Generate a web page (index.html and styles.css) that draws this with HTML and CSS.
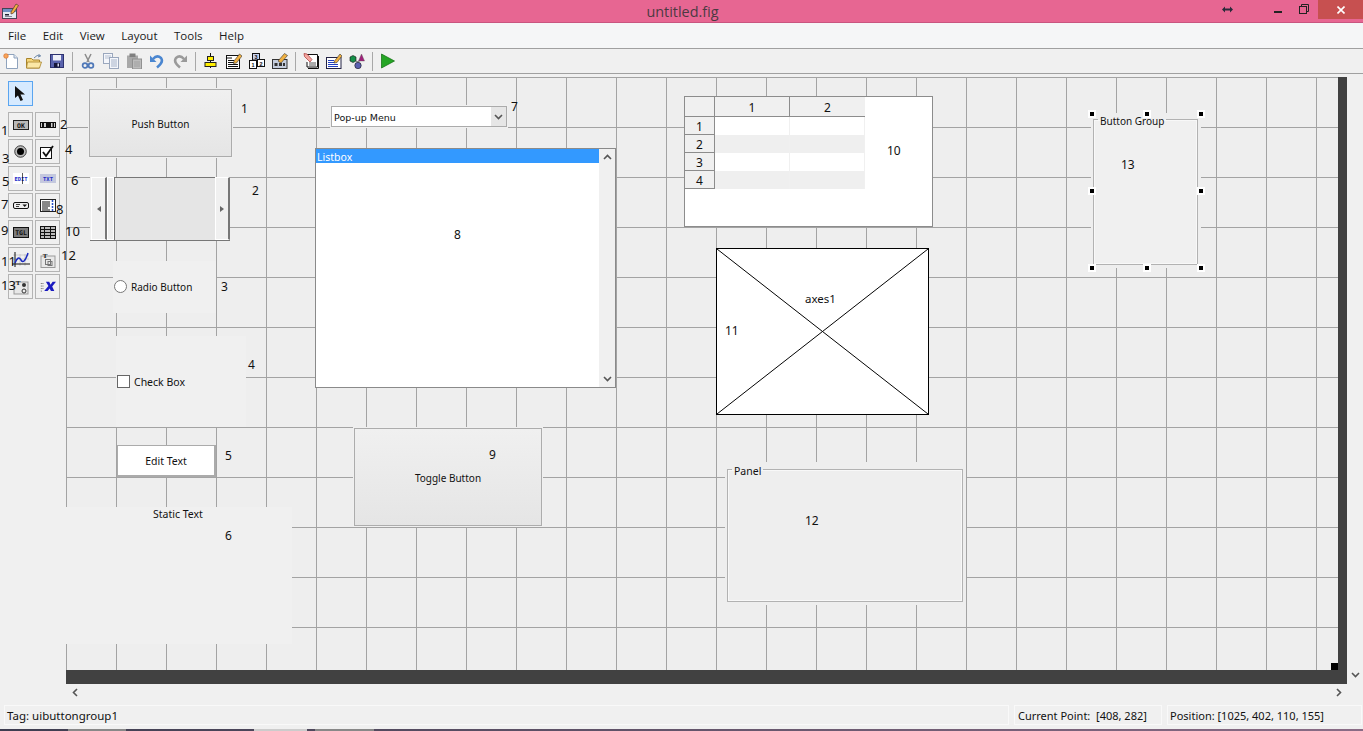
FILE: index.html
```html
<!DOCTYPE html>
<html lang="en">
<head>
<meta charset="utf-8">
<title>untitled.fig</title>
<link rel="stylesheet" href="styles.css">
</head>
<body>
<header class="titlebar">
  <svg class="app-icon" viewBox="0 0 18 18" width="18" height="18"><rect x="1.500" y="6.500" width="14" height="10" fill="#e4e9f2" stroke="#445"/><rect x="2" y="7" width="13" height="3" fill="#6f8fc4"/><rect x="4" y="12" width="4" height="1.500" fill="#223"/><rect x="4" y="14" width="7" height="1" fill="#889"/><path d="M10 10 L15 2 L17.500 3.500 L12.500 11 L10 12 Z" fill="#f0b040" stroke="#643" stroke-width=".8"/></svg>
  <div class="title">untitled.fig</div>
  <div class="winbtns">
    <svg class="wb-resize" viewBox="0 0 11 7" width="11" height="7"><path d="M0 3.500 L3 .5 V2.500 H8 V.5 L11 3.500 L8 6.500 V4.500 H3 V6.500 Z" fill="#2a2a3a"/></svg>
    <span class="wb-min"></span>
    <svg class="wb-restore" viewBox="0 0 10 10" width="10" height="10"><path d="M2.500 2.500 V.5 H9.500 V7.500 H7.500" fill="none" stroke="#222"/><rect x=".5" y="2.500" width="7" height="7" fill="none" stroke="#222"/></svg>
    <div class="wb-close"><svg viewBox="0 0 8 8" width="8" height="8"><path d="M.5 .5 L7.500 7.500 M7.500 .5 L.5 7.500" stroke="#fff" stroke-width="1.600"/></svg></div>
  </div>
</header>
<nav class="menubar">
  <span>File</span><span>Edit</span><span>View</span><span>Layout</span><span>Tools</span><span>Help</span>
</nav>
<div class="toolbar">
  <svg class="tool" viewBox="0 0 16 16"><path d="M3.500 1.500 H11 L14.500 5 V15.500 H3.500 Z" fill="#fff" stroke="#8fa3bd"/><path d="M11 1.500 V5 H14.500" fill="#dfe6f0" stroke="#8fa3bd"/><circle cx="3" cy="3" r="2.300" fill="#f6a45c" stroke="#d86a20" stroke-width=".6"/></svg>
  <svg class="tool" viewBox="0 0 16 16"><path d="M.5 5.500 H5.500 L7 7 H13.500 V15 H.5 Z" fill="#f5d67a" stroke="#a8842c"/><path d="M1.500 9 H15.500 L13.500 15 H.5 Z" fill="#fbe8a6" stroke="#a8842c" stroke-width=".8"/><path d="M8 5 Q11 1 14.500 3 M14.500 3 L12.500 1 M14.500 3 L12 4" fill="none" stroke="#6a86a8"/></svg>
  <svg class="tool" viewBox="0 0 16 16"><rect x="1.500" y="1.500" width="13" height="13" fill="#5a63ad" stroke="#2d3270"/><rect x="4" y="2" width="8" height="5.500" fill="#eef0f8"/><rect x="5" y="10" width="6" height="4.500" fill="#15163a"/><rect x="8.500" y="10.500" width="1.500" height="3" fill="#d8daf0"/></svg>
  <i class="sep"></i>
  <svg class="tool" viewBox="0 0 16 16"><path d="M5 1 L9 9 M11 1 L7 9" stroke="#8b8b8b" stroke-width="1.500"/><circle cx="5" cy="12.500" r="2.400" fill="none" stroke="#4f78b8" stroke-width="1.700"/><circle cx="11" cy="12.500" r="2.400" fill="none" stroke="#4f78b8" stroke-width="1.700"/></svg>
  <svg class="tool" viewBox="0 0 16 16"><rect x=".5" y=".5" width="9" height="10" fill="#f4f6fb" stroke="#9aa7bd"/><path d="M2 3 H8 M2 5 H6" stroke="#b5bfd0"/><rect x="6.500" y="4.500" width="9" height="11" fill="#f4f6fb" stroke="#9aa7bd"/><path d="M8 7 H14 M8 9 H14 M8 11 H14 M8 13 H14" stroke="#a5b2c8"/></svg>
  <svg class="tool" viewBox="0 0 16 16"><rect x="1" y="2.500" width="11" height="12.500" fill="#a8a8a8"/><rect x="3.500" y=".5" width="6" height="3.500" fill="#808080"/><rect x="6.500" y="6" width="9" height="10" fill="#bcbcbc" stroke="#909090"/><path d="M8 9 H14 M8 11 H14 M8 13 H14" stroke="#a0a0a0"/></svg>
  <svg class="tool" viewBox="0 0 16 16"><path d="M4 6 Q8 1.500 12 5 Q15 9 8 14.500" fill="none" stroke="#4a86d0" stroke-width="2.600"/><path d="M1 2.500 V9 H7.500 Z" fill="#4a86d0"/></svg>
  <svg class="tool" viewBox="0 0 16 16"><path d="M12 6 Q8 1.500 4 5 Q1 9 8 14.500" fill="none" stroke="#9a9a9a" stroke-width="2.600"/><path d="M15 2.500 V9 H8.500 Z" fill="#9a9a9a"/></svg>
  <i class="sep"></i>
  <svg class="tool" viewBox="0 0 16 16"><path d="M7.500 0 V15" stroke="#111"/><rect x="4.500" y="3.500" width="6" height="4" fill="#ffee00" stroke="#222"/><rect x="2" y="9.500" width="11" height="4" fill="#ffee00" stroke="#222"/></svg>
  <svg class="tool" viewBox="0 0 16 16"><rect x=".5" y="2.500" width="13" height="13" fill="#fff" stroke="#111"/><path d="M.5 5 H6 M2 7.500 H8 M2 9.500 H8 M2 11.500 H12 M2 13.500 H12" stroke="#111"/><path d="M8 8 L13.500 1 L16 3 L10.500 10 L7.500 10.500 Z" fill="#f0b040" stroke="#333" stroke-width=".6"/></svg>
  <svg class="tool" viewBox="0 0 16 16"><rect x="3.500" y=".5" width="7" height="6.500" fill="#c9d3ee" stroke="#111"/><rect x=".5" y="7.500" width="7" height="8" fill="#fff" stroke="#111"/><rect x="8.500" y="6.500" width="7" height="7" fill="#fff" stroke="#111"/><text x="7" y="5.800" class="tt">3</text><text x="4" y="13.800" class="tt">1</text><text x="12" y="12.500" class="tt">2</text></svg>
  <svg class="tool" viewBox="0 0 16 16"><rect x=".5" y="6.500" width="14.500" height="9" fill="#c6cedd" stroke="#333"/><rect x="2.500" y="10" width="3" height="3" fill="#333"/><rect x="7" y="10" width="3" height="3" fill="#333"/><rect x="11" y="10" width="2" height="3" fill="#333"/><path d="M6 8 L12.500 .5 L15.500 2.500 L9 10 Z" fill="#f0b040" stroke="#333" stroke-width=".6"/></svg>
  <i class="sep"></i>
  <svg class="tool" viewBox="0 0 16 16"><path d="M2.500 1.500 H14.500 V14 H4 V9" fill="#fff" stroke="#111"/><path d="M15.500 3 V15.500 H5" fill="none" stroke="#111"/><path d="M6 10 H13 M6 12 H13" stroke="#555"/><path d="M7 9 L1.500 3.500 L1 .5 L4 1 L9 6.500 Z" fill="#f3a7a0" stroke="#a33" stroke-width=".7"/></svg>
  <svg class="tool" viewBox="0 0 16 16"><rect x=".5" y="4.500" width="14.500" height="11" fill="#fff" stroke="#224"/><path d="M2 7.500 H8 M2 9.500 H9 M2 11.500 H12 M2 13.500 H12" stroke="#2240c0"/><path d="M8.500 8 L14 1 L16 3 L11 9.500 L8 10 Z" fill="#f0b040" stroke="#333" stroke-width=".6"/></svg>
  <svg class="tool" viewBox="0 0 16 16"><path d="M1 4 L4 2.500 L7 4 V8 L4 9.500 L1 8 Z" fill="#159048" stroke="#111" stroke-width=".6"/><path d="M12.500 1 L15.500 8 H9.500 Z" fill="#a0207a" stroke="#555" stroke-width=".4"/><rect x="6.500" y="8" width="4" height="1" fill="#888"/><circle cx="9" cy="12.500" r="3.200" fill="#5a60b0" stroke="#223" stroke-width=".7"/></svg>
  <i class="sep"></i>
  <svg class="tool" viewBox="0 0 16 16"><path d="M1.500 1 L14.500 8 L1.500 15 Z" fill="#25a525" stroke="#0c6a0c" stroke-width=".7"/></svg>
</div>
<main class="workspace">
  <aside class="palette">
    <div class="pal-btn pal-active"><svg class="ic-arrow" viewBox="0 0 13 17"><path d="M1 1 V13 L4 10.500 L6.500 16 L9 15 L6.500 9.500 H11 Z" fill="#111"/></svg></div>
    <div class="pal-grid">
      <div class="pal-btn"><svg viewBox="0 0 16 10"><rect x=".5" y=".5" width="15" height="9" fill="#b9b9b9" stroke="#222"/><text x="8" y="7.500" class="pt">OK</text></svg><b class="pn p1">1</b></div>
      <div class="pal-btn"><svg viewBox="0 0 16 6"><rect x=".5" y=".5" width="15" height="5" fill="#d0d0d0" stroke="#111"/><rect x="2" y=".5" width="2" height="5" fill="#111"/><rect x="6" y=".5" width="5" height="5" fill="#111"/><rect x="12.500" y=".5" width="1.500" height="5" fill="#111"/></svg><b class="pn p2">2</b></div>
      <div class="pal-btn"><svg class="ic-13" viewBox="0 0 14 14"><circle cx="7" cy="7" r="6.200" fill="#bbb" stroke="#333"/><circle cx="7" cy="7" r="3.800" fill="#000"/></svg><b class="pn p3">3</b></div>
      <div class="pal-btn"><svg class="ic-15" viewBox="0 0 15 14"><rect x=".5" y="2.500" width="11" height="11" fill="#fff" stroke="#111"/><path d="M3 7 L6 11 L13 1" fill="none" stroke="#111" stroke-width="1.800"/></svg><b class="pn p4">4</b></div>
      <div class="pal-btn"><svg viewBox="0 0 16 11"><rect width="16" height="11" fill="#fff"/><text x="8" y="8" class="pt pt-b">EDIT</text><path d="M9.500 0 V11" stroke="#111" stroke-width=".7"/></svg><b class="pn p5">5</b></div>
      <div class="pal-btn"><svg viewBox="0 0 16 9"><rect width="16" height="9" fill="#c4c8de"/><text x="8" y="6.800" class="pt pt-b">TXT</text></svg><b class="pn p6">6</b></div>
      <div class="pal-btn"><svg viewBox="0 0 16 7"><rect x=".5" y=".5" width="15" height="6" rx="1.500" fill="#eee" stroke="#111"/><path d="M3 2.500 H7 M3 4.500 H6" stroke="#111" stroke-width=".8"/><path d="M9.500 2.500 H14 L11.700 5 Z" fill="#111"/></svg><b class="pn p7">7</b></div>
      <div class="pal-btn"><svg viewBox="0 0 16 13"><rect x=".5" y=".5" width="15" height="12" fill="#fff" stroke="#222"/><path d="M2 3 H10 M2 5 H10 M2 7 H10 M2 9 H8 M2 11 H10" stroke="#111"/><path d="M12.500 1 V12" stroke="#2a50c8" stroke-width="1.500" stroke-dasharray="2 1"/></svg><b class="pn p8">8</b></div>
      <div class="pal-btn"><svg viewBox="0 0 16 11"><rect x=".5" y=".5" width="15" height="10" fill="#7c7c7c" stroke="#111"/><text x="8" y="8" class="pt">TGL</text></svg><b class="pn p9">9</b></div>
      <div class="pal-btn"><svg viewBox="0 0 16 13"><rect x=".5" y=".5" width="15" height="12" fill="#bbb" stroke="#111"/><path d="M.5 3.500 H15.500 M.5 6.500 H15.500 M.5 9.500 H15.500 M4.500 .5 V12.500 M10.500 .5 V12.500" stroke="#111"/></svg><b class="pn p10">10</b></div>
      <div class="pal-btn"><svg class="ic-18" viewBox="0 0 18 17"><path d="M8 3 V15 M13 3 V15 M1 8 H17 M1 4 H17" stroke="#b8b8b8" stroke-width=".6"/><path d="M3 1 V16 M0 13 H18" stroke="#111"/><path d="M3 12 Q6 4 9 9 T16 2" fill="none" stroke="#1a2ac0" stroke-width="1.500"/></svg><b class="pn p11">11</b></div>
      <div class="pal-btn"><svg viewBox="0 0 16 16"><rect x="1" y="4" width="14" height="11.500" fill="#e8e8e8" stroke="#999"/><rect x="5.500" y="7.500" width="5" height="5" fill="none" stroke="#777"/><rect x="8" y="9.500" width="4" height="4" fill="none" stroke="#777"/><text x="5" y="5.500" class="pt pt-t">T</text></svg><b class="pn p12">12</b></div>
      <div class="pal-btn"><svg viewBox="0 0 16 16"><rect x="1" y="3" width="14" height="12" fill="#e8e8e8" stroke="#999"/><text x="5" y="6" class="pt pt-t">T</text><circle cx="11" cy="6" r="2" fill="#333"/><circle cx="11" cy="12" r="2" fill="#eee" stroke="#333"/></svg><b class="pn p13">13</b></div>
      <div class="pal-btn"><svg viewBox="0 0 19 13"><path d="M1 3 H5 M1 6 H4 M1 9 H4 M1 12 H3" stroke="#333" stroke-dasharray="1 1"/><path d="M7 1 H11 L12.500 4.500 L15 1 H19 L14.500 6.500 L17 12 H13 L11.500 9 L9 12 H5 L10 6 Z" fill="#1a1ac0"/></svg></div>
    </div>
  </aside>
  <section class="stage">
    <div class="canvas-row">
      <div class="canvas">
        <div class="wg pushbtn">Push Button</div>
        <div class="wg slider"><span class="sl-btn sl-left"><i class="tri-l"></i></span><span class="sl-thumb"></span><span class="sl-track"></span><span class="sl-btn sl-right"><i class="tri-r"></i></span></div>
        <div class="wg radio"><i class="radio-dot"></i>Radio Button</div>
        <div class="wg checkbox"><i class="check-box"></i>Check Box</div>
        <div class="wg edit">Edit Text</div>
        <div class="wg static">Static Text</div>
        <div class="wg popup"><span class="popup-label">Pop-up Menu</span><span class="popup-arrow"><svg viewBox="0 0 9 6" width="9" height="6"><path d="M1 1 L4.500 4.500 L8 1" fill="none" stroke="#555" stroke-width="1.600"/></svg></span></div>
        <div class="wg listbox"><div class="lb-items"><div class="lb-sel">Listbox</div></div><div class="lb-scroll"><svg viewBox="0 0 9 6" width="9" height="6"><path d="M1 5 L4.500 1.500 L8 5" fill="none" stroke="#555" stroke-width="1.600"/></svg><svg viewBox="0 0 9 6" width="9" height="6"><path d="M1 1 L4.500 4.500 L8 1" fill="none" stroke="#555" stroke-width="1.600"/></svg></div></div>
        <div class="wg toggle">Toggle Button</div>
        <div class="wg table">
          <div class="t-head t-corner"></div><div class="t-head t-col">1</div><div class="t-head t-col t-col2">2</div>
          <div class="t-row">1</div><div class="t-c"></div><div class="t-c"></div>
          <div class="t-row">2</div><div class="t-c t-alt"></div><div class="t-c t-alt"></div>
          <div class="t-row">3</div><div class="t-c"></div><div class="t-c"></div>
          <div class="t-row">4</div><div class="t-c t-alt"></div><div class="t-c t-alt"></div>
        </div>
        <div class="wg axes"><svg viewBox="0 0 212 166" preserveAspectRatio="none"><path d="M0 0 L212 166 M212 0 L0 166" stroke="#000" stroke-width="1" fill="none"/></svg><span class="axes-label">axes1</span></div>
        <div class="halo halo-panel"></div>
        <fieldset class="wg panel"><legend>Panel</legend></fieldset>
        <div class="halo halo-group"></div>
        <fieldset class="wg bgroup"><legend>Button Group</legend></fieldset>
        <i class="hd hd1"></i><i class="hd hd2"></i><i class="hd hd3"></i><i class="hd hd4"></i><i class="hd hd5"></i><i class="hd hd6"></i><i class="hd hd7"></i><i class="hd hd8"></i>
        <b class="n n1">1</b><b class="n n2">2</b><b class="n n3">3</b><b class="n n4">4</b><b class="n n5">5</b><b class="n n6">6</b><b class="n n7">7</b><b class="n n8">8</b><b class="n n9">9</b><b class="n n10">10</b><b class="n n11">11</b><b class="n n12">12</b><b class="n n13">13</b>
        <i class="corner"></i>
      </div>
      <div class="vbar"></div>
      <div class="vscroll"><svg viewBox="0 0 9 6" width="9" height="6"><path d="M1 1 L4.500 4.500 L8 1" fill="none" stroke="#555" stroke-width="1.600"/></svg></div>
    </div>
    <div class="hbar"></div>
    <div class="hscroll"><svg viewBox="0 0 6 9" width="6" height="9"><path d="M5 1 L1.500 4.500 L5 8" fill="none" stroke="#555" stroke-width="1.600"/></svg><svg viewBox="0 0 6 9" width="6" height="9"><path d="M1 1 L4.500 4.500 L1 8" fill="none" stroke="#555" stroke-width="1.600"/></svg></div>
  </section>
</main>
<footer class="statusbar">
  <div class="st st-tag">Tag: uibuttongroup1</div>
  <div class="st st-point">Current Point:&nbsp; [408, 282]</div>
  <div class="st st-pos">Position: [1025, 402, 110, 155]</div>
</footer>
<div class="taskbar"><span class="tb tb1"></span><span class="tb tb2"></span><span class="tb tb3"></span></div>
</body>
</html>
```
FILE: styles.css
```css
* { box-sizing: border-box; }
html, body { margin: 0; height: 731px; overflow: hidden; }
body { display: flex; flex-direction: column; background: #f0f0f0; font-family: "Noto Sans", "Liberation Sans", sans-serif; font-size: 11px; color: #111; }

.titlebar { height: 23px; flex: none; background: #e76692; border-bottom: 1px solid #c95580; display: flex; align-items: flex-start; position: relative; }
.app-icon { margin: 2px 0 0 1px; }
.title { position: absolute; left: 0; right: 0; top: 3px; padding-left: 2px; text-align: center; font-size: 14.400px; line-height: 18px; color: #4c3a42; font-family: "Open Sans", sans-serif; }
.winbtns { margin-left: auto; height: 19px; position: relative; width: 141px; }
.wb-resize { position: absolute; left: 0; top: 6px; }
.wb-min { position: absolute; left: 52px; top: 11px; width: 8px; height: 2px; background: #222; }
.wb-restore { position: absolute; left: 77px; top: 4px; }
.wb-close { position: absolute; right: 0; top: 0; width: 45px; height: 19px; background: #c75050; display: flex; align-items: center; justify-content: center; }

.menubar { height: 26px; flex: none; background: #f5f6f7; border-bottom: 1px solid #a0a0a0; display: flex; align-items: center; gap: 16.500px; padding: 0 0 0 8px; font-size: 11.500px; font-family: "Open Sans", sans-serif; color: #1a1a1a; }

.toolbar { height: 25px; flex: none; background: #f0f0f0; border-bottom: 1px solid #a0a0a0; display: flex; align-items: center; padding: 0 0 0 3px; gap: 7px; }
.tool { width: 16px; height: 16px; flex: none; }
.sep { width: 1px; height: 19px; background: #a8a8a8; flex: none; }
.tt { font: bold 5.500px "Liberation Sans", sans-serif; text-anchor: middle; fill: #111; }

.workspace { flex: 1; display: flex; min-height: 0; }
.palette { width: 66px; flex: none; padding: 7px 0 0 8px; }
.pal-btn { width: 25px; height: 25px; border: 1px solid #b4b4b4; display: flex; align-items: center; justify-content: center; position: relative; background: #f0f0f0; }
.pal-btn svg { width: 16px; display: block; }
.pal-btn .ic-arrow { width: 13px; }
.pal-btn .ic-13 { width: 13px; }
.pal-btn .ic-15 { width: 15px; }
.pal-btn .ic-18 { width: 18px; }
.pal-active { background: #d6eaff; border-color: #5aa5f0; margin-bottom: 6px; }
.pal-grid { display: grid; grid-template-columns: 25px 25px; gap: 2px; }
.pt { font: bold 6.500px "DejaVu Sans Mono", monospace; text-anchor: middle; fill: #111; }
.pt-b { fill: #1a2ac8; font-size: 5.500px; }
.pt-t { font: bold 7px "Liberation Serif", serif; }
.pn { position: absolute; font: 400 13px/16px "Noto Sans", sans-serif; color: #111; z-index: 2; }
.p1 { left: -8px; top: 9px; }
.p2 { left: 24px; top: 3px; }
.p3 { left: -7px; top: 10px; }
.p4 { left: 29px; top: 1px; }
.p5 { left: -7px; top: 6px; }
.p6 { left: 35px; top: 5px; }
.p7 { left: -8px; top: 2px; }
.p8 { left: 20px; top: 7px; }
.p9 { left: -8px; top: 1px; }
.p10 { left: 29px; top: 2px; }
.p11 { left: -8px; top: 5px; }
.p12 { left: 25px; top: -1px; }
.p13 { left: -8px; top: 2px; }

.stage { flex: 1; display: flex; flex-direction: column; padding-top: 3px; min-width: 0; }
.canvas-row { display: flex; height: 593px; flex: none; }
.canvas { width: 1272px; flex: none; position: relative; background-color: #eeeeee; background-image: linear-gradient(to right, #a3a3a3 1px, transparent 1px), linear-gradient(to bottom, #a3a3a3 1px, transparent 1px); background-size: 50px 50px; }
.vbar { width: 9px; background: #414141; flex: none; }
.vscroll { flex: 1; display: flex; justify-content: center; align-items: flex-end; position: relative; top: 8px; }
.hbar { height: 14px; width: 1281px; background: #414141; flex: none; }
.hscroll { display: flex; justify-content: space-between; width: 1276px; padding: 4px 0 0 6px; }
.hscroll svg { display: block; }

.wg { position: absolute; display: flex; align-items: center; justify-content: center; background: #f0f0f0; font-size: 10.500px; margin: 0; }
.pushbtn { left: 23px; top: 12px; width: 143px; height: 68px; padding-top: 2px; font-size: 10px; background: linear-gradient(#f0f0f0, #e5e5e5); border: 1px solid #acacac; box-shadow: 0 0 0 1px #f0f0f0; }
.slider { left: 24px; top: 100px; width: 140px; height: 64px; padding-left: 1px; justify-content: flex-start; align-items: stretch; border-bottom: 1px solid #777; }
.sl-btn { width: 16px; background: #f0f0f0; border: 1px solid #fff; border-right: 2px solid #777; display: flex; align-items: center; justify-content: center; }
.sl-right { width: 15px; }
.sl-thumb { width: 7px; background: #f0f0f0; border: 1px solid #fff; }
.sl-track { flex: 1; background: #e5e5e5; border-top: 1px solid #777; border-left: 1px solid #777; }
.tri-l { border: 3.500px solid transparent; border-right: 4px solid #666; border-left: 0; }
.tri-r { border: 3.500px solid transparent; border-left: 4px solid #666; border-right: 0; }
.radio { left: 47px; top: 184px; width: 103px; height: 52px; font-size: 10px; justify-content: flex-start; align-items: flex-start; padding: 19px 0 0 1px; line-height: 14px; }
.radio-dot { width: 13px; height: 13px; border: 1px solid #777; border-radius: 50%; background: #fff; margin-right: 4px; flex: none; }
.checkbox { left: 50px; top: 259px; width: 130px; height: 91px; justify-content: flex-start; align-items: flex-start; padding: 39px 0 0 1px; line-height: 14px; }
.check-box { width: 13px; height: 13px; border: 1px solid #666; background: #fff; margin-right: 4px; flex: none; }
.edit { left: 51px; top: 368px; width: 99px; height: 32px; background: #fff; border: 1px solid #ababab; border-right-width: 2px; border-bottom-width: 2px; }
.static { left: 0; top: 430px; width: 226px; height: 137px; align-items: flex-start; line-height: 14px; justify-content: flex-start; text-indent: 87px; }
.popup { left: 265px; top: 29px; width: 176px; height: 21px; background: #fff; border: 1px solid #ababab; justify-content: space-between; box-shadow: 0 0 0 1px #f0f0f0; }
.popup-label { padding: 2px 0 0 2px; font-family: "DejaVu Sans", sans-serif; font-size: 9.500px; }
.popup-arrow { width: 15px; height: 19px; background: #e6e6e6; display: flex; align-items: center; justify-content: center; }
.listbox { left: 249px; top: 71px; width: 301px; height: 240px; background: #fff; border: 1px solid #8a8a8a; align-items: stretch; justify-content: flex-start; }
.lb-items { flex: 1; }
.lb-sel { background: #3399ff; color: #fff; height: 14px; line-height: 16px; padding-left: 1px; }
.lb-scroll { width: 16px; background: #f0f0f0; display: flex; flex-direction: column; justify-content: space-between; align-items: center; padding: 5px 0; }
.toggle { left: 288px; top: 351px; width: 188px; height: 98px; padding-top: 2px; font-size: 10px; background: linear-gradient(#f0f0f0, #e5e5e5); border: 1px solid #acacac; box-shadow: 0 0 0 1px #f0f0f0; }
.table { left: 618px; top: 19px; width: 249px; height: 131px; background: #fff; border: 1px solid #8c8c8c; display: grid; grid-template-columns: 30px 75px 75px; grid-template-rows: 20px 18px 18px 18px 18px; justify-content: start; align-content: start; align-items: stretch; font-size: 12px; }
.t-head, .t-row { background: #f0f0f0; padding-top: 2px; display: flex; align-items: center; justify-content: center; border-right: 1px solid #8c8c8c; border-bottom: 1px solid #8c8c8c; }
.t-head.t-col2 { border-right: 0; }
.t-c { background: #fff; border-right: 1px solid #f0f0f0; }
.t-alt { background: #efefef; }
.axes { left: 650px; top: 171px; width: 213px; height: 167px; background: #fff; border: 1px solid #000; }
.axes svg { position: absolute; left: 0; top: 0; width: 100%; height: 100%; }
.axes-label { position: absolute; left: 88px; top: 42px; font-size: 11.500px; }
.halo { position: absolute; background: #eeeeee; }
.halo-panel { left: 659px; top: 385px; width: 241px; height: 143px; }
.halo-group { left: 1025px; top: 36px; width: 110px; height: 155px; }
.panel, .bgroup { display: block; padding: 0; border: 1px solid #b2b2b2; background: #eeeeee; box-shadow: inset 0 0 0 1px #f8f8f8; }
.panel { left: 661px; top: 386px; width: 236px; height: 139px; }
.panel legend { margin-left: 4px; padding: 0 2px; font-size: 10.500px; line-height: 12px; position: relative; top: 2px; }
.bgroup { left: 1027px; top: 36px; width: 105px; height: 152px; background: #f0f0f0; }
.bgroup legend { margin-left: 4px; padding: 0 2px; font-size: 10px; line-height: 12px; position: relative; top: 2px; }
.hd { position: absolute; width: 8px; height: 8px; background: #000; border: 2px solid #fff; }
.hd1 { left: 1022px; top: 33px; }
.hd2 { left: 1077px; top: 33px; }
.hd3 { left: 1131px; top: 33px; }
.hd4 { left: 1022px; top: 110px; }
.hd5 { left: 1131px; top: 110px; }
.hd6 { left: 1022px; top: 187px; }
.hd7 { left: 1077px; top: 187px; }
.hd8 { left: 1131px; top: 187px; }
.n { position: absolute; font: 400 12px/14px "Noto Sans", sans-serif; color: #111; }
.n1 { left: 175px; top: 25px; }
.n2 { left: 186px; top: 107px; }
.n3 { left: 155px; top: 203px; }
.n4 { left: 182px; top: 281px; }
.n5 { left: 159px; top: 372px; }
.n6 { left: 159px; top: 452px; }
.n7 { left: 445px; top: 23px; }
.n8 { left: 388px; top: 151px; }
.n9 { left: 423px; top: 371px; }
.n10 { left: 821px; top: 67px; }
.n11 { left: 659px; top: 247px; }
.n12 { left: 739px; top: 437px; }
.n13 { left: 1055px; top: 81px; }
.corner { position: absolute; right: 0; bottom: 0; width: 7px; height: 7px; background: #000; }

.statusbar { height: 24px; flex: none; display: flex; gap: 5px; padding-left: 4px; align-items: flex-start; background: #f0f0f0; font-size: 11px; }
.st { border: 1px solid #f9f9f9; padding: 0 3px; line-height: 20px; height: 20px; }
.st-tag { width: 1005px; padding-left: 2px; font-size: 11.500px; }
.st-point { width: 148px; }
.st-pos { width: 195px; padding-left: 2px; }
.taskbar { height: 2px; flex: none; background: linear-gradient(90deg, #3d3d50, #8a6c86); display: flex; }
.tb { height: 2px; }
.tb1 { width: 58px; margin-left: 68px; background: #888; }
.tb2 { width: 53px; margin-left: 128px; background: #ccc; }
.tb3 { width: 59px; margin-left: 8px; background: #888; }
```
